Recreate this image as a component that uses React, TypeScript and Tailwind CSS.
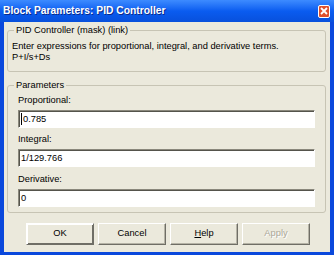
import React from 'react';

const style = {
  window: `w-[334px] h-[255px] bg-[#0a48dc] flex flex-col overflow-hidden font-['Liberation_Sans',Arial,sans-serif] text-[9.3px] text-black`,
  titleBar: `h-[22px] flex items-center justify-between pl-[3px] pr-[4px] bg-gradient-to-b from-[#3d8bff] via-[#0a5cf0] to-[#0850dc]`,
  title: `text-white font-bold text-[10.3px] leading-none [text-shadow:1px_1px_0_#0a2a8a]`,
  body: `flex-1 mx-[4px] mb-[3px] bg-[#ebe9dc] pl-[3px] pr-[4px] flex flex-col`,
  group: `border border-[#c7c4b4] rounded-[3px] px-[4px] min-w-0`,
  legend: `ml-[2px] px-[2px] leading-[12px]`,
  label: `block leading-[12px] pl-[6px]`,
  input: `ml-[6px] mr-[6px] h-[18px] bg-white flex items-center pl-[2px] border border-t-[#8a887c] border-l-[#8a887c] border-b-white border-r-white shadow-[inset_1px_1px_0_#55544c]`,
  button: `w-[68px] h-[22px] flex items-center justify-center bg-[#ebe9dc] border border-t-white border-l-white border-b-[#6f6e66] border-r-[#6f6e66] shadow-[inset_-1px_-1px_0_#b5b3a6]`,
};

const Field = ({ label, value, caret, top }: any) => (
  <>
    <span className={style.label + ' ' + top}>{label}</span>
    <div className={style.input + ' mt-[4px]'}>
      {caret && <span className="w-[1px] h-[12px] bg-black mr-[1px]" />}
      <span className="leading-[12px]">{value}</span>
    </div>
  </>
);

export default function App() {
  return (
    <div className={style.window}>
      <div className={style.titleBar}>
        <span className={style.title}>Block Parameters: PID Controller</span>
        <div className="w-[12px] h-[13px] rounded-[2px] border border-white bg-[#e0502c] flex items-center justify-center">
          <svg width="8" height="8" viewBox="0 0 8 8">
            <path d="M1 1 L7 7 M7 1 L1 7" stroke="white" strokeWidth="1.8" />
          </svg>
        </div>
      </div>

      <div className={style.body}>
        <fieldset className={style.group + ' mt-[2px] pb-[8px]'}>
          <legend className={style.legend}>PID Controller (mask) (link)</legend>
          <div className="pt-[5px] leading-[11px]">
            <div>Enter expressions for proportional, integral, and derivative terms.</div>
            <div>P+I/s+Ds</div>
          </div>
        </fieldset>

        <fieldset className={style.group + ' mt-[7px] pb-[5px] flex flex-col'}>
          <legend className={style.legend}>Parameters</legend>
          <Field label="Proportional:" value="0.785" caret top="mt-[3px]" />
          <Field label="Integral:" value="1/129.766" top="mt-[5px]" />
          <Field label="Derivative:" value="0" top="mt-[6px]" />
        </fieldset>

        <div className="flex gap-[4px] ml-[19px] mt-[10px]">
          <div className={style.button + ' border-[#000] shadow-[inset_1px_1px_0_#fff,inset_-1px_-1px_0_#6f6e66]'}>OK</div>
          <div className={style.button}>Cancel</div>
          <div className={style.button}>
            <span><span className="underline">H</span>elp</span>
          </div>
          <div className={style.button + ' text-[#aca899] [text-shadow:1px_1px_0_#fff]'}>Apply</div>
        </div>
      </div>
    </div>
  );
}
